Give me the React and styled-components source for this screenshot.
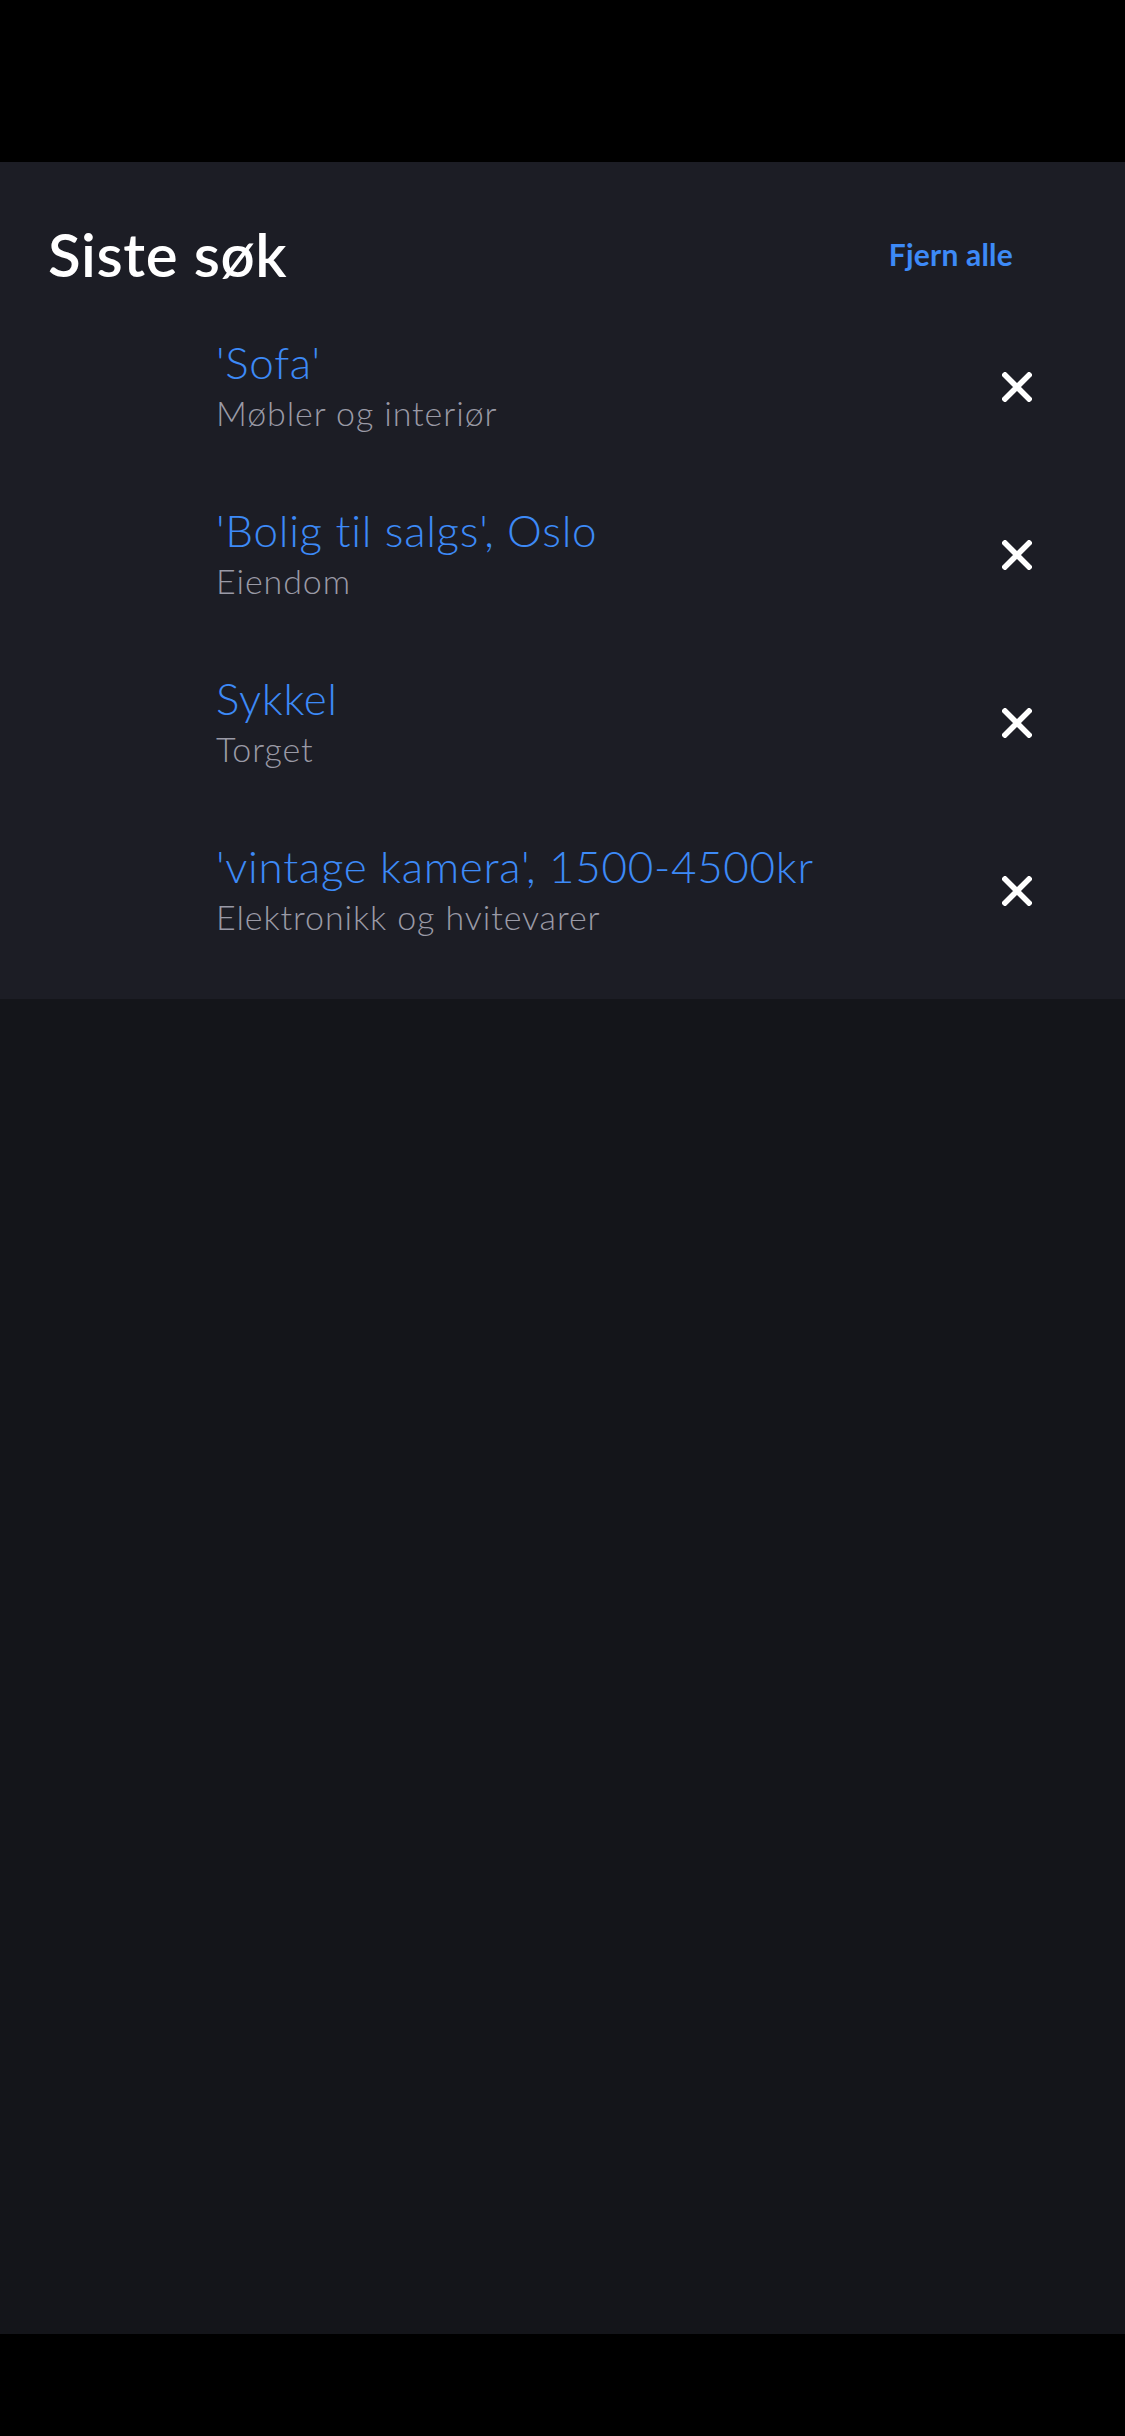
import React from "react";
import styled, { createGlobalStyle } from "styled-components";

const Global = createGlobalStyle`
  html, body { margin: 0; padding: 0; background: #000; }
  body {
    font-family: Lato, "Noto Sans", sans-serif;
    -webkit-font-smoothing: antialiased;
    font-variant-ligatures: none;
    font-feature-settings: "liga" 0, "clig" 0;
  }
  * { box-sizing: border-box; }
`;

const Screen = styled.div`
  width: 1125px;
  height: 2436px;
  display: flex;
  flex-direction: column;
  background: #000;
`;

const StatusArea = styled.div`
  height: 162px;
  flex: none;
  background: #000;
`;

const Panel = styled.section`
  flex: none;
  background: #1c1d25;
  padding: 0 0 24px 0;
`;

const Header = styled.div`
  height: 141px;
  display: flex;
  align-items: center;
  justify-content: space-between;
  padding: 42px 112px 0 48px;
`;

const Title = styled.h1`
  margin: 0;
  font-size: 60px;
  font-weight: 600;
  color: #ffffff;
  letter-spacing: 0.6px;
`;

const ClearAll = styled.button`
  background: none;
  border: 0;
  padding: 0;
  font-family: inherit;
  font-size: 30px;
  font-weight: 700;
  color: #3d8af7;
  letter-spacing: 0.2px;
`;

const List = styled.ul`
  list-style: none;
  margin: 0;
  padding: 0;
`;

const Row = styled.li`
  height: 168px;
  display: flex;
  align-items: center;
  padding: 0 93px 0 216px;
`;

const Texts = styled.div`
  flex: 1;
  display: flex;
  flex-direction: column;
`;

const Query = styled.span`
  font-size: 44px;
  font-weight: 300;
  color: #3d8af7;
  line-height: 50px;
  letter-spacing: 0.7px;
  margin-top: -4px;
`;

const Category = styled.span`
  font-size: 34px;
  font-weight: 300;
  color: #9a9aa6;
  line-height: 42px;
  letter-spacing: 0.9px;
  margin-top: 5px;
`;

const RemoveButton = styled.button`
  width: 30px;
  height: 30px;
  background: none;
  border: 0;
  padding: 0;
  display: flex;
  align-items: center;
  justify-content: center;
`;

const Rest = styled.div`
  flex: 1;
  background: #14151a;
`;

const BottomBar = styled.div`
  height: 102px;
  flex: none;
  background: #000;
`;

const CloseIcon = () => (
  <svg width="30" height="30" viewBox="0 0 30 30">
    <path d="M3 3 L27 27 M27 3 L3 27" stroke="#fff" strokeWidth="5.5" strokeLinecap="square" />
  </svg>
);

const searches = [
  { q: "'Sofa'", c: "Møbler og interiør" },
  { q: "'Bolig til salgs', Oslo", c: "Eiendom" },
  { q: "Sykkel", c: "Torget" },
  { q: "'vintage kamera', 1500-4500kr", c: "Elektronikk og hvitevarer" },
];

export default function App() {
  return (
    <>
      <Global />
      <Screen>
        <StatusArea />
        <Panel>
          <Header>
            <Title>Siste søk</Title>
            <ClearAll>Fjern alle</ClearAll>
          </Header>
          <List>
            {searches.map((s) => (
              <Row key={s.q}>
                <Texts>
                  <Query>{s.q}</Query>
                  <Category>{s.c}</Category>
                </Texts>
                <RemoveButton aria-label="Fjern">
                  <CloseIcon />
                </RemoveButton>
              </Row>
            ))}
          </List>
        </Panel>
        <Rest />
        <BottomBar />
      </Screen>
    </>
  );
}
